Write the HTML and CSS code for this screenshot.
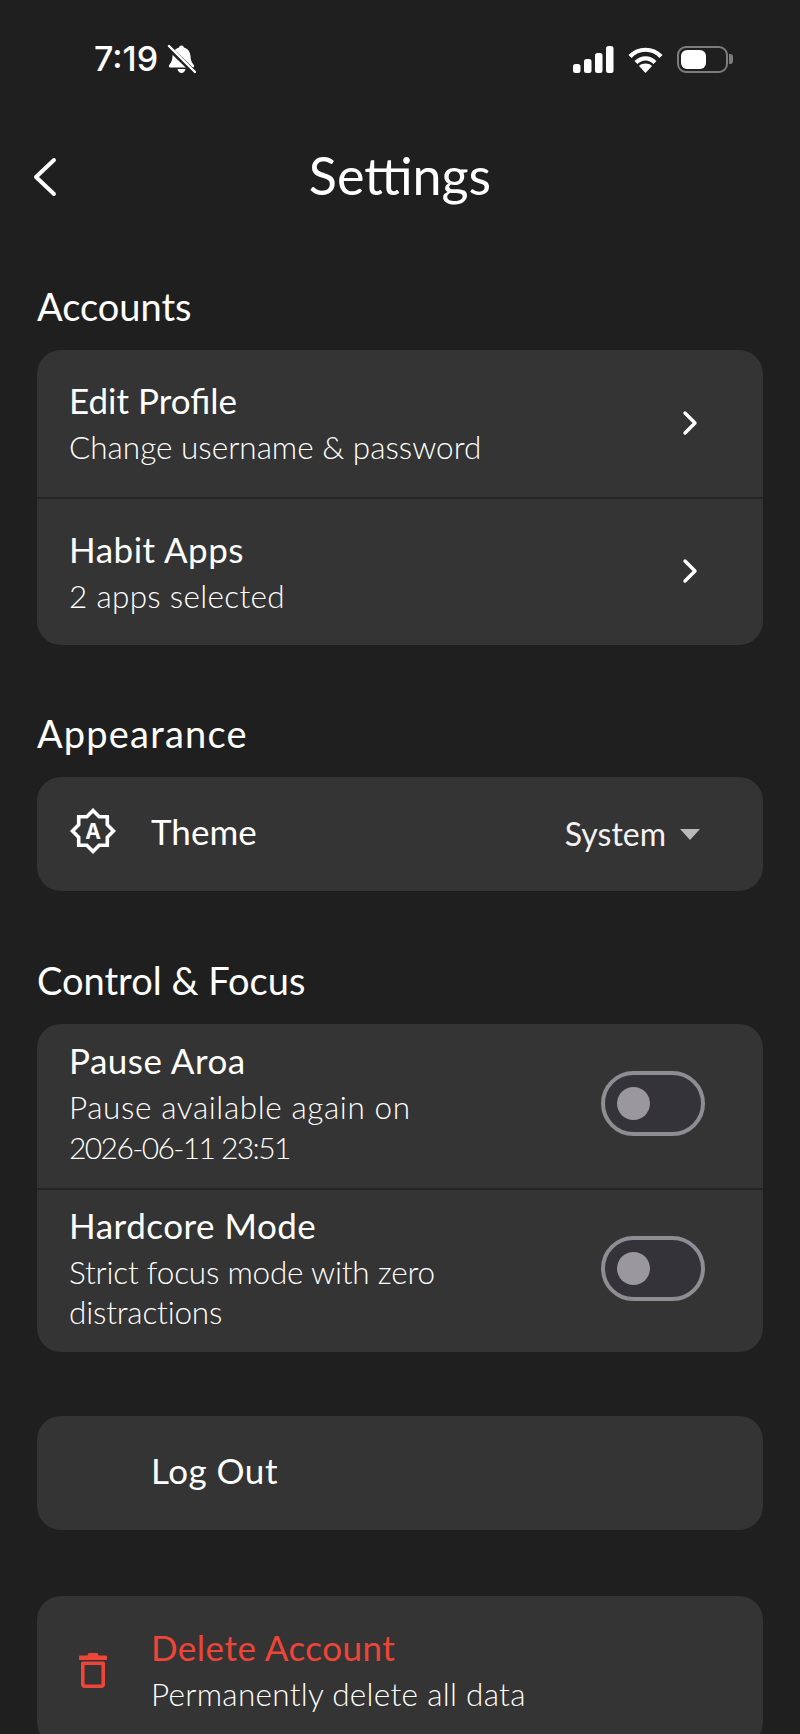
FILE: index.html
```html
<!DOCTYPE html>
<html lang="en">
<head>
<meta charset="utf-8">
<title>Settings</title>
<link rel="stylesheet" href="styles.css">
</head>
<body>
<div class="page">
  <div class="status">
    <div class="status-left">
      <span class="time">7:19</span>
      <svg class="bell" viewBox="0 0 29 30" width="29" height="30">
        <path fill="#fff" d="M14.5 1.5c1.3 0 2.2.9 2.4 2.1 4 1 6.3 4.2 6.6 8.4.2 3.4.6 6 3.300 9 .8.9.4 2.500-1.100 2.500H3.300C1.800 23.500 1.400 21.900 2.200 21c2.700-3 3.100-5.600 3.300-9 .3-4.200 2.600-7.400 6.600-8.400.2-1.200 1.100-2.100 2.400-2.100z"/>
        <path fill="#fff" d="M10.500 25h8c-.3 2.300-1.900 4-4 4s-3.700-1.700-4-4z"/>
        <path stroke="#1f1f1f" stroke-width="5" d="M1 3l27 26"/>
        <path stroke="#fff" stroke-width="2.400" stroke-linecap="round" d="M2 2l26 26"/>
      </svg>
    </div>
    <div class="status-right">
      <svg class="signal" viewBox="0 0 41 27" width="41" height="27">
        <rect x="0" y="18" width="7.500" height="9" rx="2.500" fill="#fff"/>
        <rect x="11" y="13" width="7.500" height="14" rx="2.500" fill="#fff"/>
        <rect x="22" y="7" width="7.500" height="20" rx="2.500" fill="#fff"/>
        <rect x="33" y="0" width="7.500" height="27" rx="2.500" fill="#fff"/>
      </svg>
      <svg class="wifi" viewBox="0 0 35 27" width="35" height="27">
        <path fill="none" stroke="#fff" stroke-width="4.200" d="M2 10.500C10.500 1.500 24.500 1.500 33 10.500"/>
        <path fill="none" stroke="#fff" stroke-width="4.200" d="M8 16.500c5.500-5.500 13.500-5.500 19 0"/>
        <path fill="#fff" d="M17.500 27l-6.500-7c3.500-3.200 9.500-3.200 13 0z"/>
      </svg>
      <div class="battery"><div class="battery-fill"></div></div>
      <div class="battery-nub"></div>
    </div>
  </div>

  <header class="topbar">
    <svg class="back" viewBox="0 0 26 40" width="26" height="40">
      <path fill="none" stroke="#fff" stroke-width="4" stroke-linecap="round" stroke-linejoin="round" d="M22 3L4 20l18 17"/>
    </svg>
    <h1 class="title">Settings</h1>
  </header>

  <h2 class="section-title first">Accounts</h2>
  <section class="card">
    <div class="row row-link">
      <div class="text">
        <div class="label">Edit Profile</div>
        <div class="sub">Change username &amp; password</div>
      </div>
      <svg class="chev" viewBox="0 0 16 26" width="16" height="26"><path fill="none" stroke="#fff" stroke-width="3.400" stroke-linecap="round" stroke-linejoin="round" d="M3 3l10 10L3 23"/></svg>
    </div>
    <div class="row row-link">
      <div class="text">
        <div class="label track">Habit Apps</div>
        <div class="sub loose">2 apps selected</div>
      </div>
      <svg class="chev" viewBox="0 0 16 26" width="16" height="26"><path fill="none" stroke="#fff" stroke-width="3.400" stroke-linecap="round" stroke-linejoin="round" d="M3 3l10 10L3 23"/></svg>
    </div>
  </section>

  <h2 class="section-title wide">Appearance</h2>
  <section class="card">
    <div class="row-single">
      <svg class="theme-icon" viewBox="0 0 46 46" width="46" height="46">
        <path fill="none" stroke="#fff" stroke-width="3.600" stroke-linejoin="miter" d="M23 2.500l6.200 6.200h8.100v8.100l6.200 6.200-6.200 6.200v8.100h-8.100L23 43.500l-6.200-6.200H8.700v-8.100L2.500 23l6.200-6.200V8.700h8.100z"/>
        <text class="theme-a" x="23" y="30.500" text-anchor="middle">A</text>
      </svg>
      <div class="label single">Theme</div>
      <div class="select">
        <span class="select-value">System</span>
        <span class="caret"></span>
      </div>
    </div>
  </section>

  <h2 class="section-title control">Control &amp; Focus</h2>
  <section class="card">
    <div class="row row-toggle">
      <div class="text">
        <div class="label track">Pause Aroa</div>
        <div class="sub"><span class="wide-line">Pause available again on</span><br><span class="date">2026-06-11 23:51</span></div>
      </div>
      <div class="switch"><span class="knob"></span></div>
    </div>
    <div class="row row-toggle">
      <div class="text">
        <div class="label track">Hardcore Mode</div>
        <div class="sub tight">Strict focus mode with zero<br>distractions</div>
      </div>
      <div class="switch"><span class="knob"></span></div>
    </div>
  </section>

  <section class="card solo">
    <div class="row-single">
      <div class="icon-gap"></div>
      <div class="label single track">Log Out</div>
    </div>
  </section>

  <section class="card solo">
    <div class="row-delete">
      <svg class="trash" viewBox="0 0 28 35" width="28" height="35">
        <path fill="#ef4438" d="M9.500 0h9l1 2.500H27a1 1 0 0 1 1 1V7H0V3.500a1 1 0 0 1 1-1h7.500z"/>
        <path fill="none" stroke="#ef4438" stroke-width="3.600" stroke-linejoin="round" d="M3.800 10.200h20.400v21.200a1.800 1.800 0 0 1-1.800 1.800H5.600a1.800 1.800 0 0 1-1.800-1.800z"/>
      </svg>
      <div class="text">
        <div class="label danger track">Delete Account</div>
        <div class="sub loose">Permanently delete all data</div>
      </div>
    </div>
  </section>
</div>
</body>
</html>
```
FILE: styles.css
```css
* { box-sizing: border-box; }
html, body { margin: 0; padding: 0; background: #1f1f1f; }
body { font-family: "Lato", "Liberation Sans", sans-serif; color: #fff; }
.page { width: 800px; height: 1734px; overflow: hidden; padding: 0 37px; }

.status { height: 118px; padding: 44px 0 0 57px; display: flex; justify-content: space-between; align-items: flex-start; }
.status-left { display: flex; align-items: center; gap: 9px; height: 30px; }
.time { font-family: "Inter", sans-serif; font-weight: 500; font-size: 34px; line-height: 30px; }
.status-right { display: flex; align-items: center; padding-right: 30px; height: 28px; margin-top: 1px; }
.signal { margin-right: 14px; }
.wifi { margin-right: 14px; }
.battery { width: 51px; height: 27px; border: 2.500px solid #7c7c7c; border-radius: 9px; padding: 2px; }
.battery-fill { width: 25px; height: 100%; background: #fff; border-radius: 6px; }
.battery-nub { width: 4px; height: 10px; margin-left: 1px; background: #7c7c7c; border-radius: 0 3px 3px 0; }

.topbar { height: 114px; margin-bottom: 53px; display: flex; align-items: center; justify-content: center; position: relative; }
.back { position: absolute; left: -5px; top: 39px; }
.title { margin: 0; font-weight: 400; font-size: 52px; line-height: 60px; }

.section-title { margin: 67px 0 23px; font-weight: 400; font-size: 38px; line-height: 42px; height: 42px; }
.section-title.first { margin-top: 0; }
.section-title.wide { letter-spacing: 1.200px; }
.section-title.control { margin-top: 68px; }

.card { background: #343434; border-radius: 24px; overflow: hidden; }
.solo { margin-top: 64px; }
.solo + .solo { margin-top: 66px; }
.row { display: flex; align-items: center; justify-content: space-between; padding-left: 32px; }
.row + .row { border-top: 2px solid #242424; }
.row-link { height: 147px; padding-right: 65px; }
.row-link + .row-link { height: 148px; }
.chev { margin-bottom: 2px; }
.row-toggle { height: 164px; padding-right: 58px; padding-bottom: 6px; }
.row-single { display: flex; align-items: center; height: 114px; padding: 0 63px 6px 33px; }
.row-delete { display: flex; align-items: center; height: 150px; padding: 0 33px 2px 42px; }

.label { font-size: 35px; line-height: 40px; }
.label.track { letter-spacing: 0.500px; }
.sub { margin-top: 7px; font-size: 31.500px; line-height: 40px; font-weight: 300; color: #fff; }
.sub.loose { letter-spacing: 0.300px; }
.sub.tight { letter-spacing: -0.200px; }
.wide-line { letter-spacing: 0.600px; }
.date { font-size: 30px; letter-spacing: -1.600px; }
.label.single { margin-left: 35px; }
.danger { color: #ef4438; }

.theme-icon { flex: none; }
.theme-a { font-family: "Inter", sans-serif; font-size: 21px; font-weight: 700; fill: #fff; }
.select { margin-left: auto; display: flex; align-items: center; gap: 14px; padding-top: 6px; }
.select-value { font-size: 32px; line-height: 40px; color: #f2f2f2; }
.caret { width: 0; height: 0; border-left: 10.500px solid transparent; border-right: 10.500px solid transparent; border-top: 11px solid #b9b9b9; }

.switch { flex: none; width: 104px; height: 65px; border: 4px solid #8f8d93; border-radius: 33px; background: #35333a; display: flex; align-items: center; padding-left: 12px; }
.knob { width: 33px; height: 33px; border-radius: 50%; background: #9a979f; }

.icon-gap { width: 46px; flex: none; }
.trash { flex: none; margin-right: 44px; }
```
